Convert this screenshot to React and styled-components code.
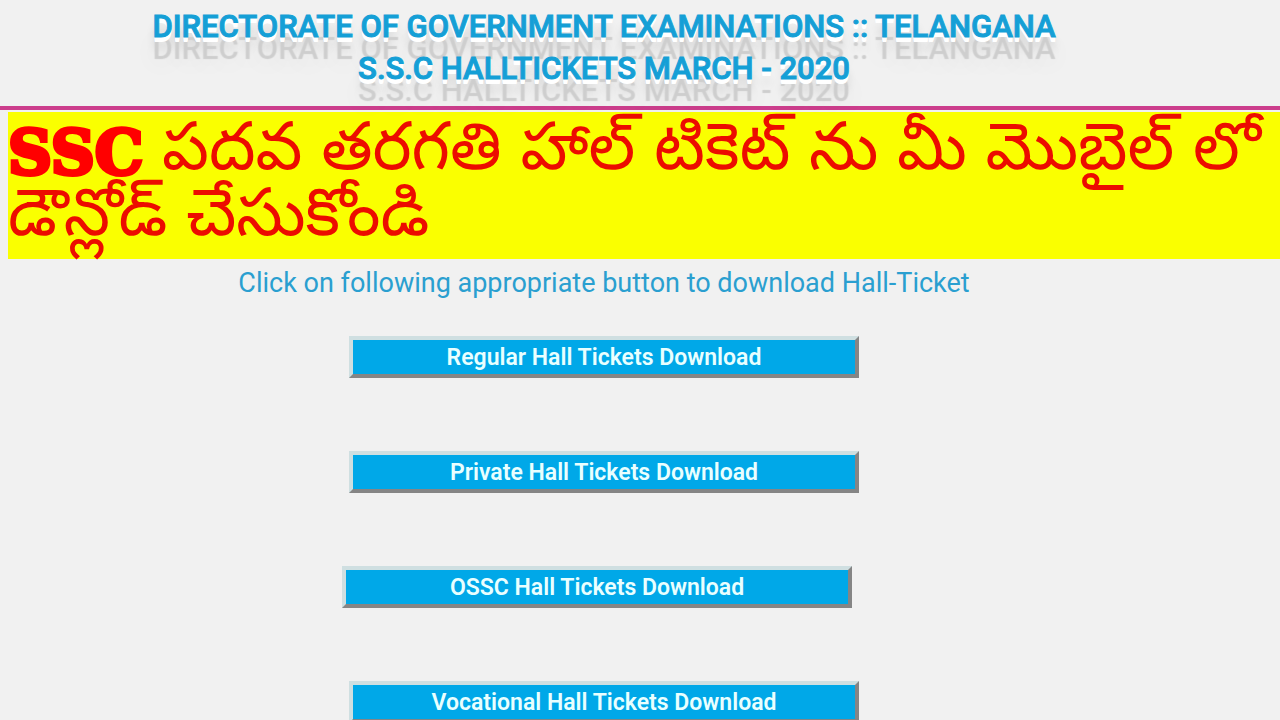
import React from 'react';
import styled, { createGlobalStyle } from 'styled-components';

const GlobalStyle = createGlobalStyle`
    html {
        scrollbar-width: none;
    }

    body {
        margin: 0;
        background-color: #f1f1f1;
        font-family: Roboto, sans-serif;
    }
`;

const Header = styled.header`
    padding: 6px 72px 16px 0;
    border-bottom: 4px solid #cc3e8c;
    text-align: center;
`;

const Title = styled.h1`
    margin: 0;
    color: #159fd6;
    font-size: 31px;
    font-weight: 500;
    line-height: 42px;
    -webkit-text-stroke: 1px #159fd6;
    text-shadow:
        0 1px 0 #ffffff,
        0 2px 0 #ffffff,
        0 3px 0 #ffffff,
        0 4px 0 #ffffff,
        0 5px 0 #ffffff,
        0 22px 1px #cecece,
        0 12px 8px rgba(0, 0, 0, 0.12),
        0 26px 24px rgba(0, 0, 0, 0.08);
`;

const Banner = styled.p`
    margin: 2px 0 0 8px;
    padding: 12px 0 3px;
    background-color: #faff00;
    color: #ec0c00;
    font-family: "Noto Sans Telugu", "Noto Sans", sans-serif;
    font-size: 66px;
    line-height: 66px;
`;

const Exam = styled.strong`
    color: #ff0000;
    font-family: "DejaVu Serif", serif;
    font-size: 61px;
    font-weight: 700;
    line-height: 48px;
    vertical-align: middle;
    -webkit-text-stroke: 4px #ff0000;
`;

const Main = styled.main`
    display: flex;
    flex-direction: column;
    align-items: center;
    padding-right: 72px;
`;

const Hint = styled.p`
    margin: 4px 0 33px;
    color: #2a9fd0;
    font-size: 27px;
    line-height: 40px;
`;

const ButtonList = styled.div`
    display: flex;
    flex-direction: column;
    align-items: center;
    gap: 73px;
`;

const DownloadButton = styled.button`
    width: 510px;
    height: 42px;
    margin-right: ${props => props.$shifted ? '14px' : '0'};
    padding: 0;
    border: 4px solid;
    border-color: #cfdfe1 #858585 #858585 #cfdfe1;
    background-color: #00a8e8;
    color: #e9ffff;
    font-family: Roboto, sans-serif;
    font-size: 23px;
    font-weight: 600;
    cursor: pointer;
`;

const App = () => (
    <>
        <GlobalStyle />
        <Header>
            <Title>DIRECTORATE OF GOVERNMENT EXAMINATIONS :: TELANGANA</Title>
            <Title>S.S.C HALLTICKETS MARCH - 2020</Title>
        </Header>
        <Banner>
            <Exam>SSC</Exam> పదవ తరగతి హాల్ టికెట్ ను మీ మొబైల్ లో డౌన్లోడ్ చేసుకోండి
        </Banner>
        <Main>
            <Hint>Click on following appropriate button to download Hall-Ticket</Hint>
            <ButtonList>
                <DownloadButton>Regular Hall Tickets Download</DownloadButton>
                <DownloadButton>Private Hall Tickets Download</DownloadButton>
                <DownloadButton $shifted>OSSC Hall Tickets Download</DownloadButton>
                <DownloadButton>Vocational Hall Tickets Download</DownloadButton>
            </ButtonList>
        </Main>
    </>
);

export default App;
